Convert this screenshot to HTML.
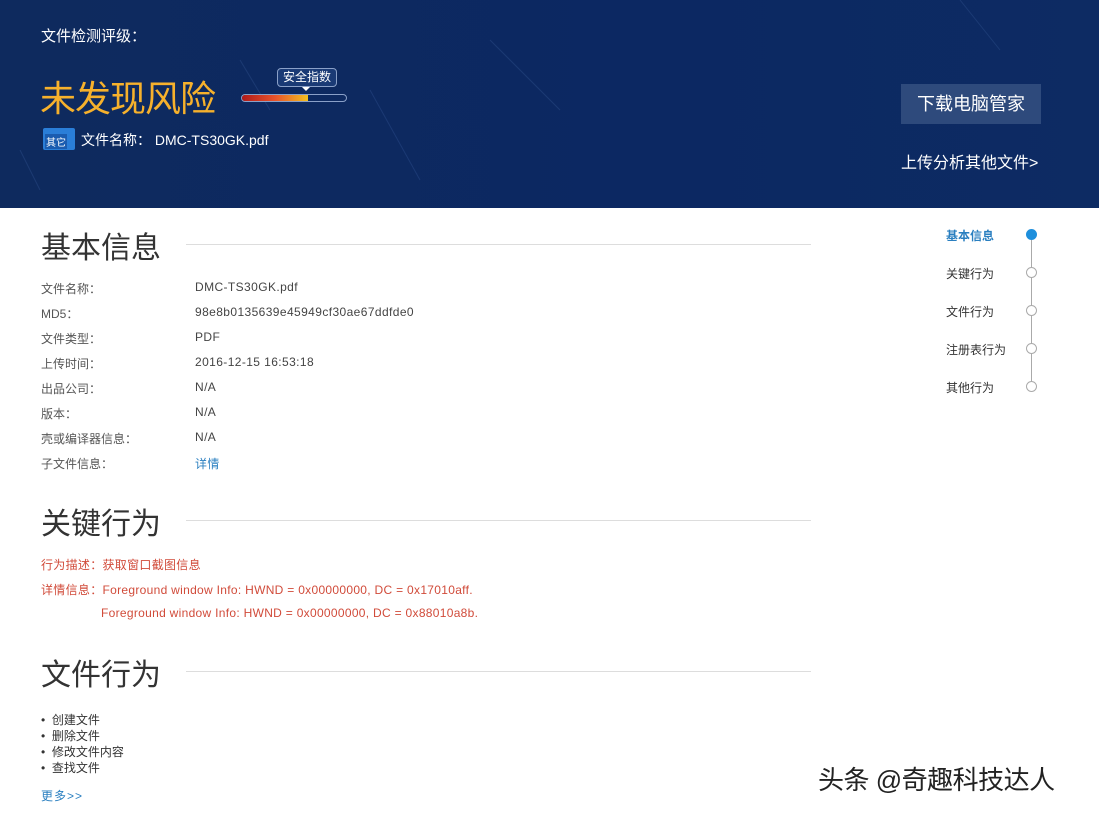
<!DOCTYPE html>
<html><head><meta charset="utf-8"><style>
*{margin:0;padding:0;box-sizing:border-box}
body{width:1099px;height:815px;background:#fff;font-family:"Liberation Sans","Noto Sans CJK SC",sans-serif;position:relative;overflow:hidden;color:#333}
.hd{position:absolute;left:0;top:0;width:1099px;height:208px;background:linear-gradient(90deg,#0e2a5e,#0c2862 60%,#0d2b63);overflow:hidden}
.a{position:absolute;white-space:nowrap}
.sec{position:absolute;left:41px;font-size:30px;color:#333}
.line{position:absolute;left:186px;width:625px;height:1px;background:#ddd}
.k{position:absolute;left:41px;font-size:12px;color:#555}
.v{position:absolute;left:195px;font-size:12px;color:#444;letter-spacing:0.4px}
.nav{position:absolute;left:946px;font-size:12px;color:#333}
.dot{position:absolute;left:1026px;width:11px;height:11px;border:1px solid #aaa;border-radius:50%;background:#fff}
.red{color:#d14b3a;font-size:12px;position:absolute;letter-spacing:0.3px}
</style></head><body>
<div class="hd">
<svg width="1099" height="208" style="position:absolute;left:0;top:0"><g stroke="#2a4a86" stroke-width="1" opacity=".5"><line x1="240" y1="60" x2="270" y2="110"/><line x1="370" y1="90" x2="420" y2="180"/><line x1="490" y1="40" x2="560" y2="110"/><line x1="960" y1="0" x2="1000" y2="50"/><line x1="20" y1="150" x2="40" y2="190"/></g></svg>
<div class="a" style="left:41px;top:25px;font-size:15px;color:#fff">文件检测评级：</div>
<div class="a" style="left:40px;top:77px;font-size:36px;color:#f6b12c;line-height:44px;letter-spacing:-1px">未发现风险</div>
<div class="a" style="left:277px;top:68px;width:60px;height:19px;border:1px solid #8aa0c8;border-radius:4px;background:#1a3a75;color:#fff;font-size:12px;text-align:center;line-height:17px">安全指数</div>
<div class="a" style="left:302px;top:87px;width:0;height:0;border-left:4px solid transparent;border-right:4px solid transparent;border-top:4px solid #fff"></div>
<div class="a" style="left:241px;top:94px;width:106px;height:8px;border:1px solid #8aa0c8;border-radius:4px;overflow:hidden"><div style="width:66px;height:100%;background:linear-gradient(90deg,#b01a1a,#e8532a 50%,#f2c020)"></div></div>
<div class="a" style="left:43px;top:128px;width:32px;height:22px;background:#2a7ed8;border-radius:2px"></div>
<div class="a" style="left:45px;top:134px;font-size:10px;color:#fff;background:#1a5cb0;padding:0 1px">其它</div>
<div class="a" style="left:81px;top:130px;font-size:14px;color:#fff">文件名称：&nbsp;DMC-TS30GK.pdf</div>
<div class="a" style="left:901px;top:84px;width:140px;height:40px;background:#2e4a7c;color:#fff;font-size:18px;text-align:center;line-height:40px">下载电脑管家</div>
<div class="a" style="left:901px;top:149px;font-size:16px;color:#fff">上传分析其他文件&gt;</div>
</div>

<div class="sec" style="top:223px">基本信息</div><div class="line" style="top:244px"></div>
<div class="k" style="top:280px">文件名称：</div><div class="v" style="top:280px">DMC-TS30GK.pdf</div>
<div class="k" style="top:305px">MD5：</div><div class="v" style="top:305px">98e8b0135639e45949cf30ae67ddfde0</div>
<div class="k" style="top:330px">文件类型：</div><div class="v" style="top:330px">PDF</div>
<div class="k" style="top:355px">上传时间：</div><div class="v" style="top:355px">2016-12-15 16:53:18</div>
<div class="k" style="top:380px">出品公司：</div><div class="v" style="top:380px">N/A</div>
<div class="k" style="top:405px">版本：</div><div class="v" style="top:405px">N/A</div>
<div class="k" style="top:430px">壳或编译器信息：</div><div class="v" style="top:430px">N/A</div>
<div class="k" style="top:455px">子文件信息：</div><div class="v" style="top:455px;color:#2a7fc0">详情</div>

<div class="sec" style="top:499px">关键行为</div><div class="line" style="top:520px"></div>
<div class="red" style="left:41px;top:556px">行为描述：获取窗口截图信息</div>
<div class="red" style="left:41px;top:581px">详情信息：Foreground window Info: HWND = 0x00000000, DC = 0x17010aff.</div>
<div class="red" style="left:101px;top:606px">Foreground window Info: HWND = 0x00000000, DC = 0x88010a8b.</div>

<div class="sec" style="top:650px">文件行为</div><div class="line" style="top:671px"></div>
<div class="k" style="top:712px;line-height:16px;color:#333">
<div>•&nbsp;&nbsp;创建文件</div><div>•&nbsp;&nbsp;删除文件</div><div>•&nbsp;&nbsp;修改文件内容</div><div>•&nbsp;&nbsp;查找文件</div></div>
<div class="k" style="top:787px;color:#2a7fc0;letter-spacing:1px">更多&gt;&gt;</div>

<div class="a" style="left:1031px;top:234px;width:1px;height:152px;background:#aaa"></div>
<div class="nav" style="top:227px;color:#2a7fc0;font-weight:bold">基本信息</div><div class="dot" style="top:229px;background:#1e8fdc;border-color:#1e8fdc"></div>
<div class="nav" style="top:265px">关键行为</div><div class="dot" style="top:267px"></div>
<div class="nav" style="top:303px">文件行为</div><div class="dot" style="top:305px"></div>
<div class="nav" style="top:341px">注册表行为</div><div class="dot" style="top:343px"></div>
<div class="nav" style="top:379px">其他行为</div><div class="dot" style="top:381px"></div>

<div class="a" style="left:818px;top:760px;font-size:26px;color:#222;letter-spacing:-0.5px">头条 @奇趣科技达人</div>
</body></html>
